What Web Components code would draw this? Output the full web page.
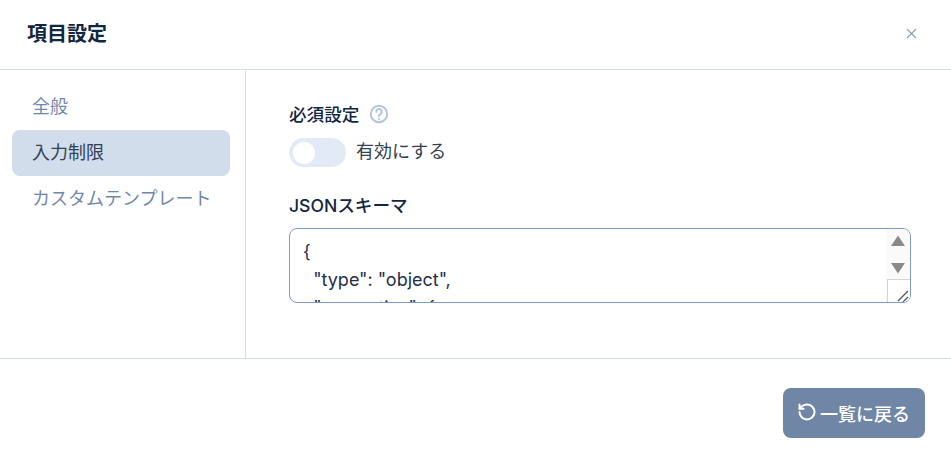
<!DOCTYPE html>
<html lang="ja"><head><meta charset="utf-8"><style>
html,body{margin:0;padding:0;background:#fff;height:100%}
body{font-family:"Inter","Noto Sans CJK JP",sans-serif;overflow:hidden}
</style></head><body>
<settings-dialog></settings-dialog>
<script>
class Base extends HTMLElement{
  constructor(){super();this.attachShadow({mode:'open'}).innerHTML=this.constructor.html;}
}
const cjk='"Noto Sans CJK JP",sans-serif';
class ToggleSwitch extends Base{static html=`<style>
:host{display:flex;align-items:center;gap:10px;height:29px}
.t{width:57px;height:29px;border-radius:15px;background:#e2eaf6;box-sizing:border-box;padding:4px}
.k{width:22px;height:22px;border-radius:50%;background:#fff}
.l{font:400 18px/24px ${cjk};color:#334155;height:29px}
</style><div class="t"><div class="k"></div></div><span class="l"><slot></slot></span>`}
class JsonEditor extends Base{static html=`<style>
:host{display:block;position:relative;width:622px;height:75px;box-sizing:border-box;border:1px solid #7f9cc2;border-radius:8px;overflow:hidden;background:#fff}
.c{margin:0;padding:9px 13px;font:400 18px/28px "Inter",${cjk};color:#1e3048;white-space:pre;height:100%;box-sizing:border-box;overflow:hidden}
.b{position:absolute;top:0;right:0;bottom:0;width:24px;background:#fafafa;display:flex;flex-direction:column;align-items:center}
.b svg{display:block}
.g{position:absolute;right:0;bottom:0;width:23px;height:23px;box-sizing:border-box;border:1px solid #d4d4d4;border-right:0;border-bottom:0;background:#fff}
</style><pre class="c"><slot></slot></pre><div class="b">
<svg style="margin-top:6px" width="16" height="12" viewBox="0 0 16 12"><path d="M8 0.5 15 11H1Z" fill="#8a8a8a"/></svg>
<svg style="margin-top:15px" width="16" height="12" viewBox="0 0 16 12"><path d="M8 11.5 15 1H1Z" fill="#8a8a8a"/></svg>
</div><div class="g"><svg width="22" height="22" viewBox="0 0 22 22"><path d="M10 21 20 11M15 22 20 17" stroke="#555" stroke-width="1.3" fill="none"/></svg></div>`}
class SideItem extends Base{static html=`<style>
:host{display:block;height:46px;border-radius:8px;padding:0 20px;font:400 18px/42px ${cjk};color:#7188a8;white-space:nowrap}
:host([active]){background:#d1ddeb;color:#334155}
</style><slot></slot>`}
class BackButton extends Base{static html=`<style>
:host{display:flex;align-items:center;justify-content:center;width:142px;height:50px;border-radius:8px;background:#6f86a6;color:#fff;font:500 18px/48px ${cjk}}
svg{display:block;margin:-2px 3px 0 -1px}
</style><svg width="20" height="20" viewBox="0 0 24 24" fill="none" stroke="#fff" stroke-width="2.4" stroke-linecap="round" stroke-linejoin="round"><path d="M3 12a9 9 0 1 0 9-9 9.75 9.75 0 0 0-6.74 2.74L3 8"/><path d="M3 3v5h5"/></svg><slot></slot>`}
class SettingsDialog extends Base{static html=`<style>
:host{display:flex;flex-direction:column;width:951px;height:464px;background:#fff;color:#1e293b}
header{height:69px;flex:none;box-sizing:content-box;display:flex;align-items:center;justify-content:space-between;padding:0 34px 0 27px;border-bottom:1px solid #d5dde8}
h1{margin:0 0 4px;font:700 20px/1 ${cjk};color:#12263f}
.x{display:block;margin-bottom:2px}
.mid{height:288px;flex:none;display:flex}
nav{width:246px;flex:none;box-sizing:border-box;border-right:1px solid #d5dde8;padding:14px 15px 0 12px;display:flex;flex-direction:column}
main{flex:1;padding:32px 40px 0 43px;min-width:0}
.lab{font:500 17.6px/24px ${cjk};color:#12263f;display:flex;align-items:center;gap:10px}
.json{font:500 17.6px/24px "Inter",${cjk};color:#12263f;margin:27px 0 10px}
.q{display:block}
toggle-switch{margin-top:12px}
footer{flex:1;border-top:1px solid #d5dde8;display:flex;justify-content:flex-end;padding:29px 26px 0 0}
</style>
<header><h1>項目設定</h1><svg class="x" width="11" height="11" viewBox="0 0 11 11"><path d="M1 1 10 10M10 1 1 10" stroke="#8b9db5" stroke-width="1.1"/></svg></header>
<div class="mid"><nav><side-item>全般</side-item><side-item active>入力制限</side-item><side-item>カスタムテンプレート</side-item></nav>
<main><div class="lab"><span>必須設定</span><svg class="q" width="20" height="20" viewBox="0 0 20 20" fill="none" stroke="#b4c6de" stroke-width="2"><circle cx="10" cy="10" r="8.2"/><path d="M7.3 7.8a2.7 2.7 0 1 1 4 2.3c-.9.5-1.3 1-1.3 1.9" stroke-linecap="round"/><circle cx="10" cy="14.8" r=".5" fill="#b4c6de" stroke-width="1.2"/></svg></div>
<toggle-switch>有効にする</toggle-switch>
<div class="json">JSONスキーマ</div>
<json-editor>{
  "type": "object",
  "properties": {</json-editor></main></div>
<footer><back-button>一覧に戻る</back-button></footer>`}
customElements.define('toggle-switch',ToggleSwitch);
customElements.define('json-editor',JsonEditor);
customElements.define('side-item',SideItem);
customElements.define('back-button',BackButton);
customElements.define('settings-dialog',SettingsDialog);
</script></body></html>
